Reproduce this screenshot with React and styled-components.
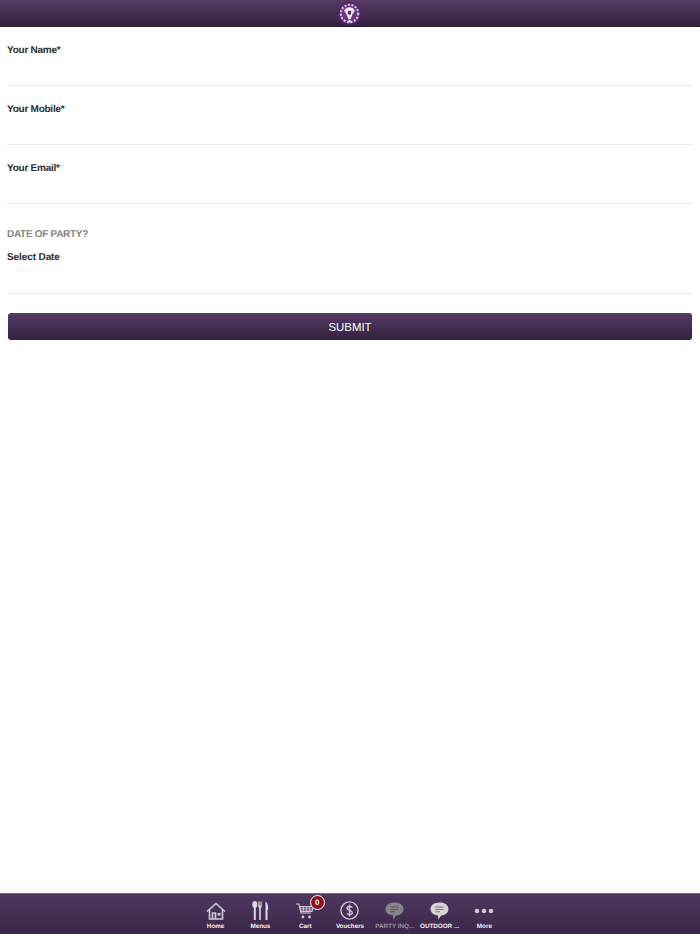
import styled, { createGlobalStyle } from "styled-components"

const GlobalStyle = createGlobalStyle`
  html, body { margin: 0; padding: 0; background: #fff; }
  body {
    font-family: "Liberation Sans", Arial, sans-serif;
    text-rendering: geometricPrecision;
  }
`

const Page = styled.div`
  display: flex;
  flex-direction: column;
  height: 934px;
  overflow: hidden;
`
const Header = styled.header`
  height: 27px;
  flex: none;
  display: flex;
  align-items: center;
  justify-content: center;
  padding-right: 1px;
  background: linear-gradient(#553b66, #33213f);
  box-sizing: border-box;
  border-bottom: 1px solid #2a1a35;
`
const Form = styled.form`
  flex: 1;
  padding: 16px 7px 0;
`
const Field = styled.div`
  height: 42px;
  margin-bottom: 16px;
  border-bottom: 1px solid #ebebeb;
`
const DateField = styled(Field)`
  height: 43.5px;
  margin-bottom: 0;
`
const Label = styled.label`
  display: block;
  padding-top: 1px;
  font-size: 10px;
  letter-spacing: ${(p) => p.$spacing || "-0.25px"};
  line-height: 14px;
  font-weight: 700;
  color: #2b2b2b;
`
const Section = styled.h2`
  margin: 24px 0 8.5px;
  font-size: 10px;
  letter-spacing: -0.3px;
  line-height: 13px;
  font-weight: 700;
  color: #858585;
`
const SubmitButton = styled.button`
  display: block;
  width: 684px;
  height: 27px;
  margin: 19px 0 0 1px;
  padding: 0;
  border: 0;
  border-radius: 3px;
  background: linear-gradient(#553b66, #33213f);
  color: #fff;
  font-family: inherit;
  font-size: 11.4px;
`
const TabBar = styled.nav`
  height: 41px;
  flex: none;
  box-sizing: border-box;
  display: flex;
  justify-content: center;
  border-top: 1px solid #7b6788;
  background: linear-gradient(#4f3760, #3b2747);
`
const Tab = styled.div`
  position: relative;
  width: 44.8px;
  display: flex;
  flex-direction: column;
  align-items: center;
  color: ${(p) => (p.$dim ? "#9b8fa4" : "#f4f2f5")};
`
const TabIcon = styled.div`
  height: 25px;
  margin-top: 4px;
  display: flex;
  align-items: center;
  justify-content: center;
`
const TabLabel = styled.span`
  font-size: 6.3px;
  line-height: 8px;
  font-weight: 700;
  white-space: nowrap;
`
const Badge = styled.span`
  position: absolute;
  top: 1px;
  left: 27px;
  width: 13px;
  height: 13px;
  border: 1px solid #fff;
  border-radius: 50%;
  background: #8e0f1b;
  color: #fff;
  font-size: 8px;
  font-weight: 700;
  line-height: 13px;
  text-align: center;
`

const Logo = () => (
  <svg width="23" height="23" viewBox="0 0 22 22">
    <circle cx="11" cy="11" r="10.5" fill="#6d3585" />
    <circle cx="11" cy="11" r="10.5" fill="none" stroke="#4d2560" />
    <circle cx="11" cy="11" r="8.300" fill="none" stroke="#d9c7e0" strokeWidth="2" strokeDasharray="1.800 1.600" />
    <path d="M6 8.500C7 4 15 4 16 8.500l-2 3-2 5h-2l-2-5z" fill="#f1edf3" />
    <path d="M9.500 8.500h3v3.500h-3z" fill="#4a2a5c" />
    <circle cx="11" cy="18.500" r="1.200" fill="#f1edf3" />
  </svg>
)

const Home = () => (
  <svg width="20" height="18" viewBox="0 0 20 18" fill="none" stroke="#cfc9d4" strokeWidth="1.600">
    <path d="M1 9.500 10 1.500l9 8" />
    <path d="M3.500 8v9h13V8" />
    <path d="M6.500 17v-6h3v6" />
    <rect x="11.500" y="11" width="3" height="2.500" fill="#cfc9d4" stroke="none" />
  </svg>
)

const Menus = () => (
  <svg width="17" height="19" viewBox="0 0 17 19" fill="#dcd8e0">
    <ellipse cx="2.800" cy="3.500" rx="2.500" ry="3.400" />
    <rect x="1.800" y="5" width="2" height="14" />
    <path d="M6.300 0.500h.8v4h.5v-4h.8v4h.5v-4h.8V6l-.9 1.200V19H7.200V7.200L6.300 6z" />
    <path d="M13.500 .5c1.700 1 2.800 3.500 2.800 8h-.8V19h-2z" />
  </svg>
)

const Cart = () => (
  <svg width="20" height="16" viewBox="0 0 20 16" fill="none" stroke="#cfc9d4" strokeWidth="1.100">
    <path d="M1 1h3l2 9h10" />
    <path d="M4.500 3.500h14l-1.500 5H6z" />
    <path d="M5 5.200h13M5.500 7h12M8.500 3.500v5M11.500 3.500v5M14.500 3.500v5" strokeWidth=".8" />
    <circle cx="8" cy="14" r="1.400" fill="#cfc9d4" stroke="none" />
    <circle cx="14.500" cy="14" r="1.400" fill="#cfc9d4" stroke="none" />
  </svg>
)

const Dollar = () => (
  <svg width="19" height="19" viewBox="0 0 19 19">
    <circle cx="9.500" cy="9.500" r="8.600" fill="none" stroke="#cfc9d4" strokeWidth="1.400" />
    <path d="M12.300 6.500C11.500 5.200 7 4.800 7 7.200c0 2.600 5.300 1.800 5.300 4.500 0 2.500-4.600 2.200-5.600.7M9.500 3.500v12" fill="none" stroke="#cfc9d4" strokeWidth="1.400" />
  </svg>
)

const Bubble = ({ color }) => (
  <svg width="19" height="18" viewBox="0 0 18 17">
    <path d="M9 .5c5 0 8.500 2.500 8.500 6.200S14 12.800 10.500 12.800L8 16.500l-.5-3.800C3.500 12.500.5 10.300.5 6.700S4 .5 9 .5z" fill={color} />
    <path d="M5 4.700h8M5 7h8M5 9.300h4.500" stroke="#4a3159" strokeWidth="1" opacity=".6" />
  </svg>
)

const Dots = () => (
  <svg width="20" height="6" viewBox="0 0 20 6" fill="#cfc9d4">
    <circle cx="3" cy="3" r="2.300" />
    <circle cx="10" cy="3" r="2.300" />
    <circle cx="17" cy="3" r="2.300" />
  </svg>
)

const tabs = [
  { label: "Home", icon: <Home /> },
  { label: "Menus", icon: <Menus /> },
  { label: "Cart", icon: <Cart />, badge: "0" },
  { label: "Vouchers", icon: <Dollar /> },
  { label: "PARTY INQ...", icon: <Bubble color="#858585" />, dim: true },
  { label: "OUTDOOR ...", icon: <Bubble color="#d5d5d5" /> },
  { label: "More", icon: <Dots /> },
]

const App = () => {
  return (
    <Page>
      <GlobalStyle />
      <Header>
        <Logo />
      </Header>
      <Form onSubmit={(e) => e.preventDefault()}>
        <Field><Label>Your Name*</Label></Field>
        <Field><Label>Your Mobile*</Label></Field>
        <Field><Label>Your Email*</Label></Field>
        <Section>DATE OF PARTY?</Section>
        <DateField><Label $spacing="-0.1px">Select Date</Label></DateField>
        <SubmitButton type="submit">SUBMIT</SubmitButton>
      </Form>
      <TabBar>
        {tabs.map((tab) => (
          <Tab key={tab.label} $dim={tab.dim}>
            <TabIcon>{tab.icon}</TabIcon>
            <TabLabel>{tab.label}</TabLabel>
            {tab.badge && <Badge>{tab.badge}</Badge>}
          </Tab>
        ))}
      </TabBar>
    </Page>
  )
}

export default App
